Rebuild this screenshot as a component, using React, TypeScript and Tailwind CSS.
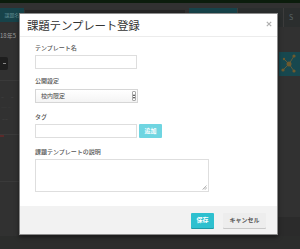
import React from "react";

const jp = { fontFamily: '"Noto Sans CJK JP", "Noto Sans", sans-serif' };

function Label({ children }: { children: React.ReactNode }) {
  return (
    <div className="text-[6px] leading-[8px] font-medium text-[#555] h-[8px]" style={jp}>
      {children}
    </div>
  );
}

export default function App() {
  return (
    <div className="relative w-[300px] h-[249px] overflow-hidden bg-[#313131]" style={jp}>
      {/* background page (dimmed) */}
      <div className="absolute left-0 top-0 w-[300px] h-[3px] bg-[#0b1c0c]" />
      <div className="absolute left-0 top-[8px] w-[24px] h-[14px] bg-[#17434a] flex items-center justify-center text-[5px] text-[#5e8a90]">
        課題名
      </div>
      <div className="absolute left-[25px] top-[10px] w-[160px] h-[3px] bg-[#262626]" />
      <div className="absolute left-[189px] top-[8px] w-[48px] h-[19px] bg-[#17434a]" />
      <div className="absolute left-[237px] top-[8px] w-[46px] h-[19px] bg-[#2b2e2e] border-l border-[#3c3c3c]" />
      <div className="absolute left-[283px] top-[8px] w-[17px] h-[19px] bg-[#2b2e2e] border-l border-[#3c3c3c] text-[7px] text-[#5a6566] pl-[5px] pt-[4px]">
        S
      </div>
      <div className="absolute left-0 top-[32px] text-[6px] text-[#9a9a9a] leading-[7px]">18年5</div>
      <div className="absolute left-0 top-[57px] w-[8px] h-[13px] bg-[#1e1e1e] rounded-r-[2px] flex items-center justify-center">
        <div className="w-[3px] h-[1px] bg-[#888]" />
      </div>
      <div className="absolute left-0 top-[80px] w-[19px] h-px bg-[#3a3a3a]" />
      <div className="absolute left-[1px] top-[96px] text-[3px] text-[#555] leading-[4px]">ー　　 ー</div>
      <div className="absolute left-[1px] top-[106px] text-[3px] text-[#555] leading-[4px]">―― ―</div>
      <div className="absolute left-[2px] top-[118px] text-[3px] text-[#555] leading-[4px]">ーー</div>
      <div className="absolute left-0 top-[134px] w-[19px] h-px bg-[#3a3a3a]" />
      <div className="absolute left-0 top-[135px] w-[4px] h-[2px] bg-[#5a2a2a]" />
      <div className="absolute left-0 top-[181px] w-[19px] h-px bg-[#3a3a3a]" />
      <div className="absolute left-[279px] top-[52px] w-[21px] h-[24px] bg-[#17484f]">
        <svg width="21" height="24" viewBox="0 0 21 24">
          <g stroke="#5f5a3a" strokeWidth="1" fill="none">
            <line x1="10" y1="12" x2="15" y2="4" />
            <line x1="10" y1="12" x2="4" y2="18" />
            <line x1="10" y1="12" x2="15" y2="19" />
            <line x1="10" y1="12" x2="5" y2="7" />
          </g>
          <g fill="#6e5a2e">
            <circle cx="10" cy="12" r="2.5" />
            <circle cx="15" cy="4" r="1.6" />
            <circle cx="4" cy="18" r="1.6" />
            <circle cx="15" cy="19" r="1.6" />
            <circle cx="5" cy="7" r="1.2" />
          </g>
        </svg>
      </div>
      <div className="absolute left-[278px] top-[217px] w-[22px] h-[32px] bg-[#2b2b2b]" />
      <div className="absolute left-0 top-[236px] w-[300px] h-[13px] bg-[#2c2d2c]" />

      {/* modal */}
      <div className="absolute left-[19px] top-[13px] w-[259px] h-[222px] bg-white border border-[#8c8c8c] shadow-[0_2px_4px_rgba(0,0,0,0.5)] flex flex-col">
        <div className="h-[23px] border-b border-[#ececec] flex items-center justify-between pl-[7px] pr-[5px]">
          <div className="text-[11.5px] leading-[14px] text-[#333] tracking-[-0.2px]">課題テンプレート登録</div>
          <svg width="6" height="6" viewBox="0 0 6 6" className="mb-[2px]">
            <path d="M0.8 0.8 L5.2 5.2 M5.2 0.8 L0.8 5.2" stroke="#b0b0b0" strokeWidth="1.2" />
          </svg>
        </div>
        <div className="flex-1 flex flex-col pl-[15px] pt-[7px]">
          <Label>テンプレート名</Label>
          <div className="mt-[3px] w-[102px] h-[14px] border border-[#dedede] bg-white" />
          <div className="mt-[8px]">
            <Label>公開設定</Label>
          </div>
          <div className="mt-[4px] w-[103px] h-[14px] border border-[#d6d6d6] bg-gradient-to-b from-white to-[#f4f4f4] flex items-center justify-between pl-[5px] pr-[1px]">
            <span className="text-[6px] text-[#444] leading-[8px]">校内限定</span>
            <div className="w-[4px] h-[10px] bg-white border border-[#aaa] rounded-[1px] flex flex-col items-center justify-center gap-[1px]">
              <div className="w-0 h-0 border-l-[1.5px] border-r-[1.5px] border-b-[2px] border-l-transparent border-r-transparent border-b-[#333]" />
              <div className="w-0 h-0 border-l-[1.5px] border-r-[1.5px] border-t-[2px] border-l-transparent border-r-transparent border-t-[#333]" />
            </div>
          </div>
          <div className="mt-[10px]">
            <Label>タグ</Label>
          </div>
          <div className="mt-[3px] flex items-center gap-[2px]">
            <div className="w-[102px] h-[14px] border border-[#dedede] bg-white" />
            <div className="w-[23px] h-[14px] bg-[#6fd5e1] rounded-[1px] flex items-center justify-center text-[6px] font-bold text-white leading-[8px]">
              追加
            </div>
          </div>
          <div className="mt-[10px]">
            <Label>課題テンプレートの説明</Label>
          </div>
          <div className="mt-[3px] relative w-[174px] h-[33px] border border-[#dedede] bg-white">
            <svg width="5" height="5" viewBox="0 0 5 5" className="absolute right-[1px] bottom-[1px]">
              <path d="M4.5 0.5 L0.5 4.5 M4.5 2 L2 4.5 M4.5 3.5 L3.5 4.5" stroke="#9a9a9a" strokeWidth="0.7" />
            </svg>
          </div>
        </div>
        <div className="h-[28px] bg-[#f2f2f2] flex items-center justify-end gap-[9px] pr-[11px]">
          <div className="w-[23px] h-[15px] bg-[#2ec0cf] rounded-[1px] shadow-[0_1px_0_#1e9aa6] flex items-center justify-center text-[6px] font-bold text-white leading-[8px]">
            保存
          </div>
          <div className="w-[43px] h-[15px] bg-[#ededed] rounded-[1px] shadow-[0_1px_0_#c8c8c8] flex items-center justify-center text-[6px] font-bold text-[#555] leading-[8px]">
            キャンセル
          </div>
        </div>
      </div>
    </div>
  );
}
